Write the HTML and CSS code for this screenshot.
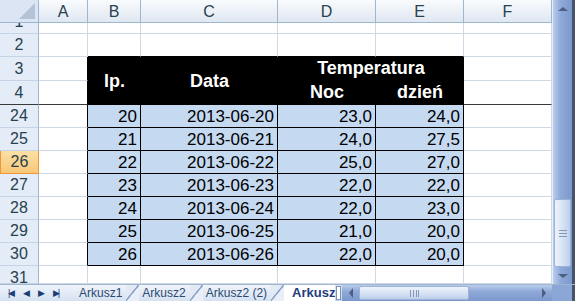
FILE: index.html
```html
<html>

<head>
  <meta name="viewport" content="width=device-width, initial-scale=1.0">
  <link rel="stylesheet" href="styles.css">
</head>

<body>
  <div class="window">
    <div class="top">
      <div class="sheet">
        <div class="ch corner"><span class="tri"></span></div>
        <div class="ch">A</div>
        <div class="ch">B</div>
        <div class="ch">C</div>
        <div class="ch">D</div>
        <div class="ch">E</div>
        <div class="ch">F</div>

        <div class="rh first"><span>1</span></div>
        <div class="c"></div><div class="c"></div><div class="c"></div><div class="c"></div><div class="c"></div><div class="c"></div>

        <div class="rh">2</div>
        <div class="c"></div><div class="c tb"></div><div class="c tb"></div><div class="c tb"></div><div class="c tb"></div><div class="c"></div>

        <div class="rh">3</div>
        <div class="c lb"></div>
        <div class="h tall">lp.</div>
        <div class="h tall">Data</div>
        <div class="h wide">Temperatura</div>
        <div class="c"></div>

        <div class="rh frz">4</div>
        <div class="c lb frz"></div>
        <div class="h">Noc</div>
        <div class="h">dzień</div>
        <div class="c frz"></div>

        <div class="rh">24</div><div class="c lb"></div><div class="d">20</div><div class="d">2013-06-20</div><div class="d">23,0</div><div class="d">24,0</div><div class="c"></div>
        <div class="rh">25</div><div class="c lb"></div><div class="d">21</div><div class="d">2013-06-21</div><div class="d">24,0</div><div class="d">27,5</div><div class="c"></div>
        <div class="rh sel">26</div><div class="c lb"></div><div class="d">22</div><div class="d">2013-06-22</div><div class="d">25,0</div><div class="d">27,0</div><div class="c"></div>
        <div class="rh">27</div><div class="c lb"></div><div class="d">23</div><div class="d">2013-06-23</div><div class="d">22,0</div><div class="d">22,0</div><div class="c"></div>
        <div class="rh">28</div><div class="c lb"></div><div class="d">24</div><div class="d">2013-06-24</div><div class="d">22,0</div><div class="d">23,0</div><div class="c"></div>
        <div class="rh">29</div><div class="c lb"></div><div class="d">25</div><div class="d">2013-06-25</div><div class="d">21,0</div><div class="d">20,0</div><div class="c"></div>
        <div class="rh">30</div><div class="c lb"></div><div class="d">26</div><div class="d">2013-06-26</div><div class="d">22,0</div><div class="d">20,0</div><div class="c"></div>

        <div class="rh last">31</div>
        <div class="c"></div><div class="c"></div><div class="c"></div><div class="c"></div><div class="c"></div><div class="c"></div>
      </div>

      <div class="vscroll">
        <div class="sbtn"><span class="arr up"></span></div>
        <div class="vtrack"></div>
        <div class="vthumb"><span class="grip"></span></div>
        <div class="sbtn"><span class="arr down"></span></div>
      </div>
      <div class="edge"></div>
    </div>

    <div class="tabbar">
      <div class="nav">
        <span class="nb">|◀</span>
        <span class="nb">◀</span>
        <span class="nb">▶</span>
        <span class="nb">▶|</span>
      </div>
      <div class="tab first">Arkusz1</div>
      <div class="tab">Arkusz2</div>
      <div class="tab">Arkusz2 (2)</div>
      <div class="tab active">Arkusz</div>
      <div class="split"></div>
      <div class="hscroll">
        <div class="hbtn"><span class="arr left"></span></div>
        <div class="hthumb"><span class="hgrip"></span></div>
        <div class="htrack"></div>
        <div class="hbtn"><span class="arr right"></span></div>
      </div>
      <div class="hcorner"></div>
    </div>
  </div>
</body>

</html>
```

FILE: styles.css
```css
body {
  margin: 0;
  background: #ffffff;
  font-family: "Liberation Sans", Arial, sans-serif;
}

.window {
  width: 575px;
  height: 301px;
  display: flex;
  flex-direction: column;
  overflow: hidden;
}

.top {
  display: flex;
  height: 284px;
}

.sheet {
  display: grid;
  grid-template-columns: 39px 49px 53px 137px 98px 88px 88px;
  grid-template-rows: 23px 11px 23px 24px 24px repeat(7, 23px) 18px;
  width: 552px;
}

.sheet > div {
  box-sizing: border-box;
  overflow: hidden;
}

/* column headers */
.ch {
  background: linear-gradient(#f9fbfd, #dfe7f2);
  border-right: 1px solid #9eb6ce;
  border-bottom: 1px solid #9eb6ce;
  color: #27414f;
  font-size: 16px;
  text-align: center;
  line-height: 23px;
}

.corner {
  background: #dbe5f3;
  position: relative;
}

.corner .tri {
  position: absolute;
  right: 3px;
  bottom: 3px;
  width: 0;
  height: 0;
  border-left: 16px solid transparent;
  border-bottom: 16px solid #b4c3d8;
}

/* row headers */
.rh {
  background: #e4ecf7;
  border-right: 1px solid #9eb6ce;
  border-bottom: 1px solid #c5d3e5;
  color: #27414f;
  font-size: 16px;
  text-align: center;
  display: flex;
  align-items: flex-end;
  justify-content: center;
  line-height: 18px;
  padding-bottom: 2px;
}

/* row 1 is scrolled half out of view */
.rh.first {
  padding-bottom: 0;
  align-items: flex-start;
}

.rh.first span {
  margin-top: -10px;
}

.rh.last {
  padding-bottom: 0;
  align-items: flex-start;
  padding-top: 3px;
}

.rh.sel {
  background: linear-gradient(#fbe0a6, #f8c877);
  border: 1px solid #f29536;
  border-top: none;
}

/* plain cells */
.c {
  border-right: 1px solid #d0d7e5;
  border-bottom: 1px solid #d0d7e5;
}

.c.tb {
  border-bottom-color: #000;
}

.c.lb {
  border-right-color: #000;
}

.frz {
  border-bottom: 1px solid #3a3a3a !important;
}

/* black header block */
.h {
  background: #000;
  color: #fff;
  font-weight: bold;
  font-size: 18px;
  display: flex;
  align-items: flex-end;
  justify-content: center;
  padding-bottom: 3px;
  line-height: 20px;
}

.h.tall {
  grid-row: span 2;
  align-items: center;
  padding-bottom: 0;
}

.h.wide {
  grid-column: span 2;
}

/* table data */
.d {
  background: #c5d9f1;
  border-right: 1px solid #000;
  border-bottom: 1px solid #000;
  font-size: 17px;
  color: #000;
  text-align: right;
  padding-right: 3px;
  display: flex;
  align-items: flex-end;
  justify-content: flex-end;
  line-height: 19px;
  padding-bottom: 1px;
}

/* vertical scrollbar */
.vscroll {
  width: 20px;
  display: flex;
  flex-direction: column;
  background: linear-gradient(90deg, #b9cdec, #8fa9d8 40%, #7b98cc);
  border-left: 1px solid #e8eef7;
  box-sizing: border-box;
}

.sbtn {
  height: 17px;
  display: flex;
  align-items: center;
  justify-content: center;
}

.vtrack {
  flex: 1;
}

.vthumb {
  height: 66px;
  margin: 0 1px;
  border: 1px solid #9cb3d8;
  border-radius: 2px;
  background: linear-gradient(90deg, #eef3fb, #d3e0f3 60%, #bccfec);
  display: flex;
  align-items: center;
  justify-content: center;
}

.grip {
  width: 8px;
  height: 5px;
  border-top: 1px solid #8499b8;
  border-bottom: 1px solid #8499b8;
  position: relative;
}

.grip::after {
  content: "";
  position: absolute;
  left: 0;
  right: 0;
  top: 2px;
  border-top: 1px solid #8499b8;
}

.edge {
  width: 3px;
  background: #46536a;
}

.arr {
  width: 0;
  height: 0;
}

.arr.up {
  border-left: 5px solid transparent;
  border-right: 5px solid transparent;
  border-bottom: 4px solid #4c5f80;
}

.arr.down {
  border-left: 5px solid transparent;
  border-right: 5px solid transparent;
  border-top: 4px solid #4c5f80;
}

.arr.left {
  border-top: 5px solid transparent;
  border-bottom: 5px solid transparent;
  border-right: 4px solid #4c5f80;
}

.arr.right {
  border-top: 5px solid transparent;
  border-bottom: 5px solid transparent;
  border-left: 4px solid #4c5f80;
}

/* sheet tabs */
.tabbar {
  height: 17px;
  display: flex;
  background: linear-gradient(#d7e3f3, #c4d5ec);
  border-top: 1px solid #9eb6ce;
  box-sizing: border-box;
}

.nav {
  width: 66px;
  display: flex;
  align-items: center;
  justify-content: space-around;
  padding: 0 3px;
  box-sizing: border-box;
  background: linear-gradient(#eef3fa, #d6e2f2);
}

.nb {
  font-size: 9px;
  color: #1b3d75;
  letter-spacing: -2px;
}

.tab {
  font-size: 12px;
  color: #2a4a72;
  line-height: 16px;
  padding: 0 17px 0 3px;
  background: linear-gradient(#f0f4fa, #d5e1f1);
  position: relative;
}

.tab.first {
  padding-left: 13px;
}

.tab::after {
  content: "";
  position: absolute;
  right: 0;
  top: 0;
  width: 13px;
  height: 16px;
  background: linear-gradient(to top left, #e9eff8 46%, #8fa6c8 48%, #8fa6c8 54%, #e3eaf5 56%);
}

.tab.active {
  background: #fff;
  color: #1f3c7d;
  font-weight: bold;
  font-size: 13px;
  padding: 0 0 0 8px;
  width: 43px;
  overflow: hidden;
}

.tab.active::after {
  display: none;
}

.split {
  width: 5px;
  background: #fff;
  border: 1px solid #7d93b4;
  box-sizing: border-box;
  margin: 1px 1px;
}

.hscroll {
  flex: 1;
  display: flex;
  background: linear-gradient(#b9cdec, #8fa9d8 40%, #7b98cc);
}

.hbtn {
  width: 17px;
  display: flex;
  align-items: center;
  justify-content: center;
}

.hthumb {
  width: 108px;
  margin: 1px 0;
  border: 1px solid #9cb3d8;
  border-radius: 2px;
  background: linear-gradient(#eef3fb, #d3e0f3 60%, #bccfec);
  display: flex;
  align-items: center;
  justify-content: center;
}

.hgrip {
  width: 7px;
  height: 7px;
  border-left: 1px solid #8499b8;
  border-right: 1px solid #8499b8;
  position: relative;
}

.hgrip::after {
  content: "";
  position: absolute;
  top: 0;
  bottom: 0;
  left: 2px;
  width: 2px;
  border-left: 1px solid #8499b8;
  border-right: 1px solid #8499b8;
}

.htrack {
  flex: 1;
}

.hcorner {
  width: 23px;
  background: #8ba7d6;
  border-right: 3px solid #46536a;
  box-sizing: border-box;
}
```
